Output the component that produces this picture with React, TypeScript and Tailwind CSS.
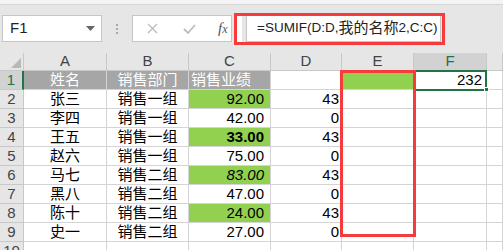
import { Fragment } from 'react';

const widths = ['w-[24px]', 'w-[83px]', 'w-[82px]', 'w-[82px]', 'w-[71px]', 'w-[72px]', 'w-[73px]', 'flex-1'];
const letters = ['A', 'B', 'C', 'D', 'E', 'F', 'G'];

type Row = {
  name: string;
  dept: string;
  score: string;
  d: string;
  green?: boolean;
  bold?: boolean;
  italic?: boolean;
};

const rows: Row[] = [
  { name: '张三', dept: '销售一组', score: '92.00', d: '43', green: true },
  { name: '李四', dept: '销售一组', score: '42.00', d: '0' },
  { name: '王五', dept: '销售一组', score: '33.00', d: '43', green: true, bold: true },
  { name: '赵六', dept: '销售一组', score: '75.00', d: '0' },
  { name: '马七', dept: '销售二组', score: '83.00', d: '43', green: true, italic: true },
  { name: '黑八', dept: '销售二组', score: '47.00', d: '0' },
  { name: '陈十', dept: '销售二组', score: '24.00', d: '43', green: true },
  { name: '史一', dept: '销售二组', score: '27.00', d: '0' },
];

const cell = 'shrink-0 h-[19px] border-r border-b border-[#d4d4d4] flex items-center overflow-hidden whitespace-nowrap';
const rowHead =
  'shrink-0 w-[24px] h-[19px] bg-[#e6e6e6] border-r border-b border-[#c8c8c8] flex items-center justify-center text-[15px] text-[#444]';

const App = () => {
  return (
    <div
      className="relative w-[503px] h-[250px] overflow-hidden bg-white text-black"
      style={{ fontFamily: '"Liberation Sans", "Noto Sans CJK SC", sans-serif' }}
    >
      {/* formula bar */}
      <div className="h-[53px] bg-[#e6e6e6]">
        <div className="h-[5px] bg-[#f3f3f3] border-b border-[#d6d6d6]" />
        <div className="flex items-center pt-[10px]">
          <div className="shrink-0 ml-[2px] w-[100px] h-[27px] bg-white border border-[#c6c6c6] flex items-center justify-between pl-[7px] pr-[6px] text-[15px] text-[#222]">
            <span>F1</span>
            <svg width="9" height="5" viewBox="0 0 9 5">
              <path d="M0 0h9L4.5 5z" fill="#666" />
            </svg>
          </div>
          <div className="shrink-0 ml-[14px] flex flex-col gap-[2px]">
            <span className="w-[2px] h-[2px] bg-[#a8a8a8]" />
            <span className="w-[2px] h-[2px] bg-[#a8a8a8]" />
            <span className="w-[2px] h-[2px] bg-[#a8a8a8]" />
          </div>
          <div className="shrink-0 ml-[14px] w-[100px] h-[27px] bg-white border border-[#c6c6c6] flex items-center">
            <svg className="ml-[14px]" width="11" height="11" viewBox="0 0 11 11">
              <path d="M1 1l9 9M10 1l-9 9" stroke="#bdbdbd" strokeWidth="1.4" />
            </svg>
            <svg className="ml-[25px]" width="13" height="10" viewBox="0 0 13 10">
              <path d="M1 5l4 4 7-8" stroke="#bdbdbd" strokeWidth="1.8" fill="none" />
            </svg>
            <span
              className="ml-[22px] text-[15px] italic text-[#555]"
              style={{ fontFamily: '"Liberation Serif", serif' }}
            >
              f<span className="text-[12px]">x</span>
            </span>
          </div>
          <div className="shrink-0 ml-[5px] w-[5px] h-[27px] bg-white" />
          <div className="shrink-0 ml-[4px] w-[195px] h-[27px] bg-white border border-[#c6c6c6] flex items-center pl-[10px] text-[13.5px] text-[#222] whitespace-nowrap overflow-hidden">
            =SUMIF(D:D,<span className="text-[15px]">我的名称</span>2,C:C)
          </div>
        </div>
      </div>

      {/* grid */}
      <div className="flex">
        <div className="shrink-0 w-[24px] h-[18px] bg-[#e6e6e6] border-r border-b border-[#c8c8c8] relative">
          <svg className="absolute right-[2px] bottom-[2px]" width="10" height="10" viewBox="0 0 10 10">
            <path d="M10 0v10H0z" fill="#b8b8b8" />
          </svg>
        </div>
        {letters.map((l, i) => (
          <div
            key={l}
            className={`shrink-0 ${widths[i + 1]} h-[18px] border-r border-b border-[#c8c8c8] flex items-center justify-center text-[15px] ${
              l === 'F' ? 'bg-[#d2d2d2] text-[#217346]' : 'bg-[#e6e6e6] text-[#444]'
            }`}
          >
            {l === 'G' ? '' : l}
          </div>
        ))}
      </div>

      <div className="flex">
        <div className="shrink-0 w-[24px] h-[19px] bg-[#d2d2d2] border-b border-[#c8c8c8] border-r-2 border-r-[#217346] flex items-center justify-center text-[15px] text-[#217346]">
          1
        </div>
        <div className={`${widths[1]} ${cell} justify-center bg-[#a6a6a6] text-white text-[15px]`}>姓名</div>
        <div className={`${widths[2]} ${cell} justify-center bg-[#a6a6a6] text-white text-[15px]`}>销售部门</div>
        <div className={`${widths[3]} ${cell} pl-[2px] bg-[#a6a6a6] text-white text-[15px]`}>销售业绩</div>
        <div className={`${widths[4]} ${cell}`} />
        <div className={`${widths[5]} ${cell} bg-[#92d050]`} />
        <div className={`${widths[6]} ${cell} relative justify-end pr-[4px] text-[15px] overflow-visible`}>
          232
          <div className="absolute -left-[1px] -top-[1px] w-[74px] h-[21px] border-2 border-[#217346]" />
          <div className="absolute -right-[3px] -bottom-[3px] w-[5px] h-[5px] bg-[#217346] border border-white" />
        </div>
        <div className={`${widths[7]} ${cell}`} />
      </div>

      {rows.map((r, i) => (
        <Fragment key={i}>
          <div className="flex">
            <div className={rowHead}>{i + 2}</div>
            <div className={`${widths[1]} ${cell} justify-center text-[15px]`}>{r.name}</div>
            <div className={`${widths[2]} ${cell} justify-center text-[15px]`}>{r.dept}</div>
            <div
              className={`${widths[3]} ${cell} justify-end pr-[6px] text-[15px] ${r.green ? 'bg-[#92d050]' : ''} ${
                r.bold ? 'font-bold' : ''
              } ${r.italic ? 'italic' : ''}`}
            >
              {r.score}
            </div>
            <div className={`${widths[4]} ${cell} justify-end pr-[2px] text-[15px]`}>{r.d}</div>
            <div className={`${widths[5]} ${cell}`} />
            <div className={`${widths[6]} ${cell}`} />
            <div className={`${widths[7]} ${cell}`} />
          </div>
        </Fragment>
      ))}

      <div className="flex">
        <div className={rowHead}>10</div>
        {widths.slice(1).map((w, i) => (
          <div key={i} className={`${w} ${cell}`} />
        ))}
      </div>

      {/* annotations */}
      <div className="absolute left-[234px] top-[13px] w-[211px] h-[32px] border-[3px] border-[#f53b3b]" />
      <div className="absolute left-[340px] top-[70px] w-[76px] h-[167px] border-[3px] border-[#f53b3b]" />
    </div>
  );
};

export default App;
